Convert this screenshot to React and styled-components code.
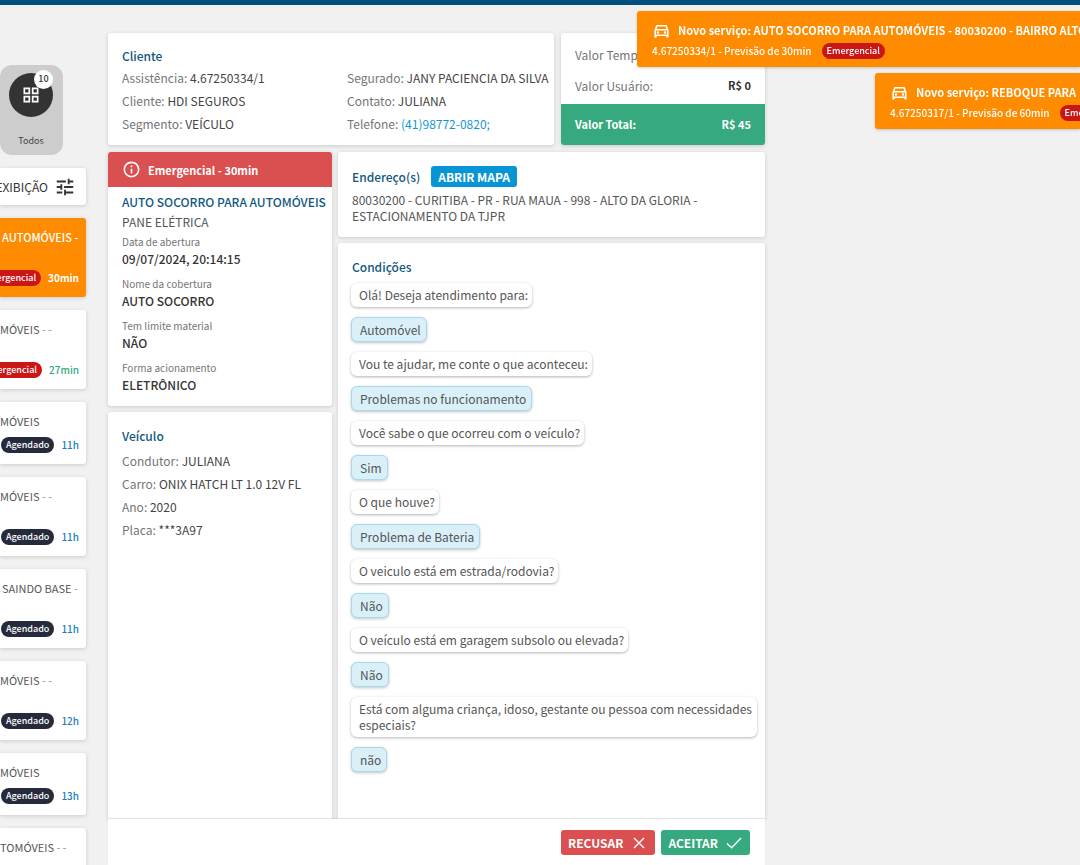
import React from "react";
import styled, { createGlobalStyle, css } from "styled-components";
import {
  MdOutlineDirectionsCar,
  MdInfoOutline,
  MdTune,
  MdOutlineGridView,
} from "react-icons/md";

const GlobalStyle = createGlobalStyle`
  *, *::before, *::after { box-sizing: border-box; }
  body {
    margin: 0;
    background: #f1f1f1;
    color: #555;
    font-family: "Noto Sans CJK SC", "Noto Sans CJK JP", "Noto Sans", sans-serif;
    font-size: 12px;
    line-height: 16px;
  }
  h2, h3, p, dl, dt, dd, ul { margin: 0; padding: 0; }
  button { font: inherit; border: 0; cursor: pointer; }
`;

const Page = styled.div`
  display: flex;
  flex-direction: column;
  height: 100vh;
  overflow: hidden;
`;

const TopBar = styled.header`
  flex: none;
  height: 5px;
  background: #00507f;
`;

const Columns = styled.div`
  flex: 1;
  min-height: 0;
  display: grid;
  grid-template-columns: 86px minmax(0, 657fr) minmax(0, 293fr);
  grid-template-rows: minmax(0, 1fr);
  column-gap: 22px;
`;

/* ---------- sidebar ---------- */

const Sidebar = styled.aside`
  padding-top: 60px;
  display: flex;
  flex-direction: column;
  gap: 13px;
`;

const CategoryButton = styled.button`
  flex: none;
  width: 63px;
  height: 90px;
  padding: 8px 1px 6px 0;
  display: flex;
  flex-direction: column;
  align-items: center;
  justify-content: space-between;
  border-radius: 12px;
  background: #cdcdcd;
  color: #444;
  font-size: 9px;
  line-height: 16px;
`;

const CategoryIcon = styled.span`
  position: relative;
  display: grid;
  place-items: center;
  width: 44px;
  height: 44px;
  border-radius: 50%;
  background: #333;
  color: #fff;
`;

const Count = styled.span`
  position: absolute;
  top: -3px;
  right: 0;
  width: 19px;
  height: 19px;
  border-radius: 50%;
  background: #fff;
  color: #333;
  font-size: 9px;
  font-weight: 500;
  line-height: 18px;
  text-align: center;
`;

const raised = css`
  background: #fff;
  box-shadow: 0 1px 4px rgba(0, 0, 0, 0.16);
`;

const DisplayButton = styled.button`
  ${raised}
  flex: none;
  height: 37px;
  padding: 0 10px 0 0;
  display: flex;
  align-items: center;
  justify-content: flex-end;
  gap: 6px;
  border-radius: 0 3px 3px 0;
  color: #333;
  font-size: 12px;
  white-space: nowrap;
  svg { flex: none; }
`;

const ServiceCard = styled.article`
  ${raised}
  flex: none;
  padding: 11px 7px 11px 0;
  display: flex;
  flex-direction: column;
  gap: 7px;
  border-radius: 0 3px 3px 0;
  white-space: nowrap;
  ${(p) => p.$active && css`background: #ff8b00; color: #fff;`}
`;

const ServiceName = styled.p`
  min-height: ${(p) => (p.$lines || 1) * 17}px;
  padding-left: ${(p) => (p.$indent ? 2 : 0)}px;
  font-size: 11px;
  line-height: 17px;
  font-weight: ${(p) => (p.$active ? 500 : 400)};
`;

const Dashes = styled.span`
  color: ${(p) => (p.$active ? "#fff" : "#999")};
`;

const ServiceStatus = styled.div`
  display: flex;
  align-items: center;
  justify-content: flex-end;
  gap: 7px;
`;

const Badge = styled.span`
  flex: none;
  height: 16px;
  padding: 0 5px;
  border-radius: 8px;
  background: ${(p) => (p.$urgent ? "#cb1616" : "#262a3d")};
  color: #fff;
  font-size: 9px;
  font-weight: 500;
  line-height: 15px;
`;

const Eta = styled.span`
  font-size: 10px;
  font-weight: ${(p) => (p.$bold ? 700 : 500)};
  color: ${(p) => p.$color};
`;

/* ---------- main panel ---------- */

const Main = styled.main`
  padding-top: 28px;
  min-height: 0;
  display: flex;
  flex-direction: column;
`;

const SummaryRow = styled.div`
  flex: none;
  display: grid;
  grid-template-columns: minmax(0, 446fr) minmax(0, 204fr);
  gap: 7px;
  margin-bottom: 7px;
`;

const DetailRow = styled.div`
  flex: 1;
  min-height: 0;
  display: grid;
  grid-template-columns: minmax(0, 224fr) minmax(0, 427fr);
  gap: 6px;
`;

const Stack = styled.div`
  min-height: 0;
  display: flex;
  flex-direction: column;
  gap: 6px;
`;

const Card = styled.section`
  ${raised}
  border-radius: 3px;
  padding: ${(p) => p.$pad || "14px"};
  ${(p) => p.$grow && css`flex: 1; border-radius: 3px 3px 0 0;`}
  ${(p) => p.$clip && css`overflow: hidden;`}
`;

const Title = styled.h2`
  color: #11587f;
  font-size: 12px;
  line-height: 20px;
  font-weight: 500;
`;

const ClientGrid = styled.div`
  display: grid;
  grid-template-columns: minmax(0, 225fr) minmax(0, 193fr);
  white-space: nowrap;
`;

const Field = styled.p`
  color: #757575;
  font-size: 12px;
  line-height: 23px;
`;

const FieldValue = styled.span`
  color: #444;
`;

const Phone = styled.a`
  color: #0f97d5;
  text-decoration: none;
`;

const VehicleFields = styled.div`
  margin-top: 3px;
`;

const ValueLines = styled.div`
  padding: 6px 14px 3px;
`;

const ValueLine = styled.div`
  display: flex;
  justify-content: space-between;
  line-height: 31px;
  color: #757575;
`;

const TotalLine = styled.div`
  display: flex;
  justify-content: space-between;
  padding: 0 14px;
  background: #36a97f;
  color: #fff;
  font-size: 11px;
  font-weight: 700;
  line-height: 41px;
`;

const Amount = styled.strong`
  font-size: 11px;
  font-weight: 700;
  color: ${(p) => p.$color || "#333"};
`;

const Alert = styled.div`
  display: flex;
  align-items: center;
  gap: 7px;
  height: 35px;
  padding: 0 14px;
  background: #da4f4f;
  color: #fff;
  font-size: 11px;
  font-weight: 700;
`;

const ServiceBody = styled.div`
  padding: 5px 14px 13px;
  white-space: nowrap;
`;

const Cause = styled.p`
  line-height: 20px;
  margin-bottom: 2px;
`;

const Facts = styled.dl`
  display: flex;
  flex-direction: column;
  gap: 9px;
`;

const FactLabel = styled.dt`
  color: #757575;
  font-size: 10px;
  line-height: 16px;
`;

const FactValue = styled.dd`
  color: #333;
  font-weight: 500;
  line-height: 17px;
`;

const AddressHead = styled.div`
  display: flex;
  align-items: center;
  gap: 11px;
  margin-bottom: 5px;
`;

const MapButton = styled.button`
  height: 21px;
  padding: 0 7px;
  border-radius: 3px;
  background: #0795d6;
  color: #fff;
  font-size: 12px;
  font-weight: 700;
  line-height: 21px;
`;

const Chat = styled.ul`
  display: flex;
  flex-direction: column;
  align-items: flex-start;
  gap: 10px;
  list-style: none;
`;

const ChatTitle = styled(Title)`
  padding-left: 1px;
  margin-bottom: 6px;
`;

const Question = styled.li`
  padding: 4px 4px 4px 8px;
  border-radius: 6px;
  background: #fff;
  box-shadow: 0 1px 3px rgba(0, 0, 0, 0.3);
`;

const Answer = styled.li`
  padding: 4px 5px 3px 8px;
  border: 1px solid #a9d9ea;
  border-radius: 6px;
  background: #d9f0f9;
  box-shadow: 0 1px 3px rgba(0, 0, 0, 0.24);
`;

const Actions = styled.footer`
  position: relative;
  flex: none;
  display: flex;
  justify-content: flex-end;
  gap: 6px;
  padding: 11px 15px 10px;
  background: #fff;
  box-shadow: 0 -1px 1px rgba(0, 0, 0, 0.1);
`;

const ActionButton = styled.button`
  display: flex;
  align-items: center;
  gap: 7px;
  height: 25px;
  padding: 0 7px;
  border-radius: 3px;
  background: ${(p) => p.$color};
  color: #fff;
  font-size: 12px;
  font-weight: 700;
`;

/* ---------- toasts ---------- */

const Toasts = styled.div`
  position: fixed;
  top: 11px;
  right: 0;
  z-index: 2;
  display: flex;
  flex-direction: column;
  align-items: flex-end;
  gap: 6px;
`;

const Toast = styled.div`
  width: ${(p) => p.$width}px;
  height: 56px;
  padding: 8px 0 0 15px;
  overflow: hidden;
  border-radius: 3px 0 0 3px;
  background: #ff8b00;
  color: #fff;
  white-space: nowrap;
  box-shadow: 0 1px 3px rgba(0, 0, 0, 0.2);
`;

const ToastTitle = styled.div`
  display: flex;
  align-items: center;
  gap: 7px;
  height: 22px;
  font-size: 11px;
  font-weight: 700;
  svg { flex: none; }
`;

const ToastInfo = styled.div`
  display: flex;
  align-items: center;
  gap: 10px;
  height: 20px;
  font-size: 10px;
  font-weight: 500;
`;

const CrossIcon = () => (
  <svg width="18" height="18" viewBox="0 0 18 18" fill="none" stroke="currentColor" strokeWidth="1.4" aria-hidden="true">
    <path d="M4 4l10 10M14 4L4 14" />
  </svg>
);

const CheckIcon = () => (
  <svg width="18" height="18" viewBox="0 0 18 18" fill="none" stroke="currentColor" strokeWidth="1.4" aria-hidden="true">
    <path d="M2 9.6l4.6 4.2L16 4" />
  </svg>
);

const services = [
  { name: "AUTOMÓVEIS", tail: " -", lines: 2, urgent: true, eta: "30min", color: "#fff", active: true, indent: true },
  { name: "MÓVEIS", tail: " - -", lines: 2, urgent: true, eta: "27min", color: "#36a97f" },
  { name: "MÓVEIS", tail: "", lines: 1, eta: "11h", color: "#1f80bd" },
  { name: "MÓVEIS", tail: " - -", lines: 2, eta: "11h", color: "#1f80bd" },
  { name: "SAINDO BASE", tail: " -", lines: 2, eta: "11h", color: "#1f80bd", indent: true },
  { name: "MÓVEIS", tail: " - -", lines: 2, eta: "12h", color: "#1f80bd" },
  { name: "MÓVEIS", tail: "", lines: 1, eta: "13h", color: "#1f80bd" },
  { name: "TOMÓVEIS", tail: " - -", lines: 2 },
];

const facts = [
  ["Data de abertura", "09/07/2024, 20:14:15"],
  ["Nome da cobertura", "AUTO SOCORRO"],
  ["Tem limite material", "NÃO"],
  ["Forma acionamento", "ELETRÔNICO"],
];

const vehicle = [
  ["Condutor:", "JULIANA"],
  ["Carro:", "ONIX HATCH LT 1.0 12V FL"],
  ["Ano:", "2020"],
  ["Placa:", "***3A97"],
];

const client = [
  ["Assistência:", "4.67250334/1"],
  ["Segurado:", "JANY PACIENCIA DA SILVA"],
  ["Cliente:", "HDI SEGUROS"],
  ["Contato:", "JULIANA"],
  ["Segmento:", "VEÍCULO"],
];

const conversation = [
  ["Olá! Deseja atendimento para:", "Automóvel"],
  ["Vou te ajudar, me conte o que aconteceu:", "Problemas no funcionamento"],
  ["Você sabe o que ocorreu com o veículo?", "Sim"],
  ["O que houve?", "Problema de Bateria"],
  ["O veiculo está em estrada/rodovia?", "Não"],
  ["O veículo está em garagem subsolo ou elevada?", "Não"],
  ["Está com alguma criança, idoso, gestante ou pessoa com necessidades especiais?", "não"],
];

const LabeledField = ({ label, value }) => (
  <Field>
    {label} <FieldValue>{value}</FieldValue>
  </Field>
);

export default function App() {
  return (
    <Page>
      <GlobalStyle />
      <TopBar />
      <Columns>
        <Sidebar>
          <CategoryButton type="button">
            <CategoryIcon>
              <MdOutlineGridView size={20} />
              <Count>10</Count>
            </CategoryIcon>
            Todos
          </CategoryButton>
          <DisplayButton type="button">
            EXIBIÇÃO
            <MdTune size={22} />
          </DisplayButton>
          {services.map((s, i) => (
            <ServiceCard key={i} $active={s.active}>
              <ServiceName $lines={s.lines} $indent={s.indent} $active={s.active}>
                {s.name}
                <Dashes $active={s.active}>{s.tail}</Dashes>
              </ServiceName>
              {s.eta && (
                <ServiceStatus>
                  <Badge $urgent={s.urgent}>{s.urgent ? "Emergencial" : "Agendado"}</Badge>
                  <Eta $color={s.color} $bold={s.active}>{s.eta}</Eta>
                </ServiceStatus>
              )}
            </ServiceCard>
          ))}
        </Sidebar>

        <Main>
          <SummaryRow>
            <Card $pad="13px 14px 10px">
              <Title>Cliente</Title>
              <ClientGrid>
                {client.map(([label, value]) => (
                  <LabeledField key={label} label={label} value={value} />
                ))}
                <Field>
                  Telefone: <Phone href="tel:41987720820">(41)98772-0820;</Phone>
                </Field>
              </ClientGrid>
            </Card>
            <Card $pad="0" $clip>
              <ValueLines>
                <ValueLine>Valor Tempo:</ValueLine>
                <ValueLine>
                  Valor Usuário: <Amount>R$ 0</Amount>
                </ValueLine>
              </ValueLines>
              <TotalLine>
                Valor Total: <Amount $color="#fff">R$ 45</Amount>
              </TotalLine>
            </Card>
          </SummaryRow>

          <DetailRow>
            <Stack>
              <Card $pad="0" $clip>
                <Alert>
                  <MdInfoOutline size={19} />
                  Emergencial - 30min
                </Alert>
                <ServiceBody>
                  <Title>AUTO SOCORRO PARA AUTOMÓVEIS</Title>
                  <Cause>PANE ELÉTRICA</Cause>
                  <Facts>
                    {facts.map(([label, value]) => (
                      <div key={label}>
                        <FactLabel>{label}</FactLabel>
                        <FactValue>{value}</FactValue>
                      </div>
                    ))}
                  </Facts>
                </ServiceBody>
              </Card>
              <Card $grow>
                <Title>Veículo</Title>
                <VehicleFields>
                  {vehicle.map(([label, value]) => (
                    <LabeledField key={label} label={label} value={value} />
                  ))}
                </VehicleFields>
              </Card>
            </Stack>

            <Stack>
              <Card $pad="14px 14px 13px">
                <AddressHead>
                  <Title>Endereço(s)</Title>
                  <MapButton type="button">ABRIR MAPA</MapButton>
                </AddressHead>
                <p>80030200 - CURITIBA - PR - RUA MAUA - 998 - ALTO DA GLORIA - ESTACIONAMENTO DA TJPR</p>
              </Card>
              <Card $grow $pad="14px 8px 14px 13px">
                <ChatTitle>Condições</ChatTitle>
                <Chat>
                  {conversation.map(([question, answer]) => (
                    <React.Fragment key={question}>
                      <Question>{question}</Question>
                      <Answer>{answer}</Answer>
                    </React.Fragment>
                  ))}
                </Chat>
              </Card>
            </Stack>
          </DetailRow>

          <Actions>
            <ActionButton type="button" $color="#da4f4f">
              RECUSAR <CrossIcon />
            </ActionButton>
            <ActionButton type="button" $color="#36a97f">
              ACEITAR <CheckIcon />
            </ActionButton>
          </Actions>
        </Main>
      </Columns>

      <Toasts role="status">
        <Toast $width={443}>
          <ToastTitle>
            <MdOutlineDirectionsCar size={19} />
            Novo serviço: AUTO SOCORRO PARA AUTOMÓVEIS - 80030200 - BAIRRO ALTO
          </ToastTitle>
          <ToastInfo>
            4.67250334/1 - Previsão de 30min <Badge $urgent>Emergencial</Badge>
          </ToastInfo>
        </Toast>
        <Toast $width={205}>
          <ToastTitle>
            <MdOutlineDirectionsCar size={19} />
            Novo serviço: REBOQUE PARA
          </ToastTitle>
          <ToastInfo>
            4.67250317/1 - Previsão de 60min <Badge $urgent>Emergencial</Badge>
          </ToastInfo>
        </Toast>
      </Toasts>
    </Page>
  );
}
